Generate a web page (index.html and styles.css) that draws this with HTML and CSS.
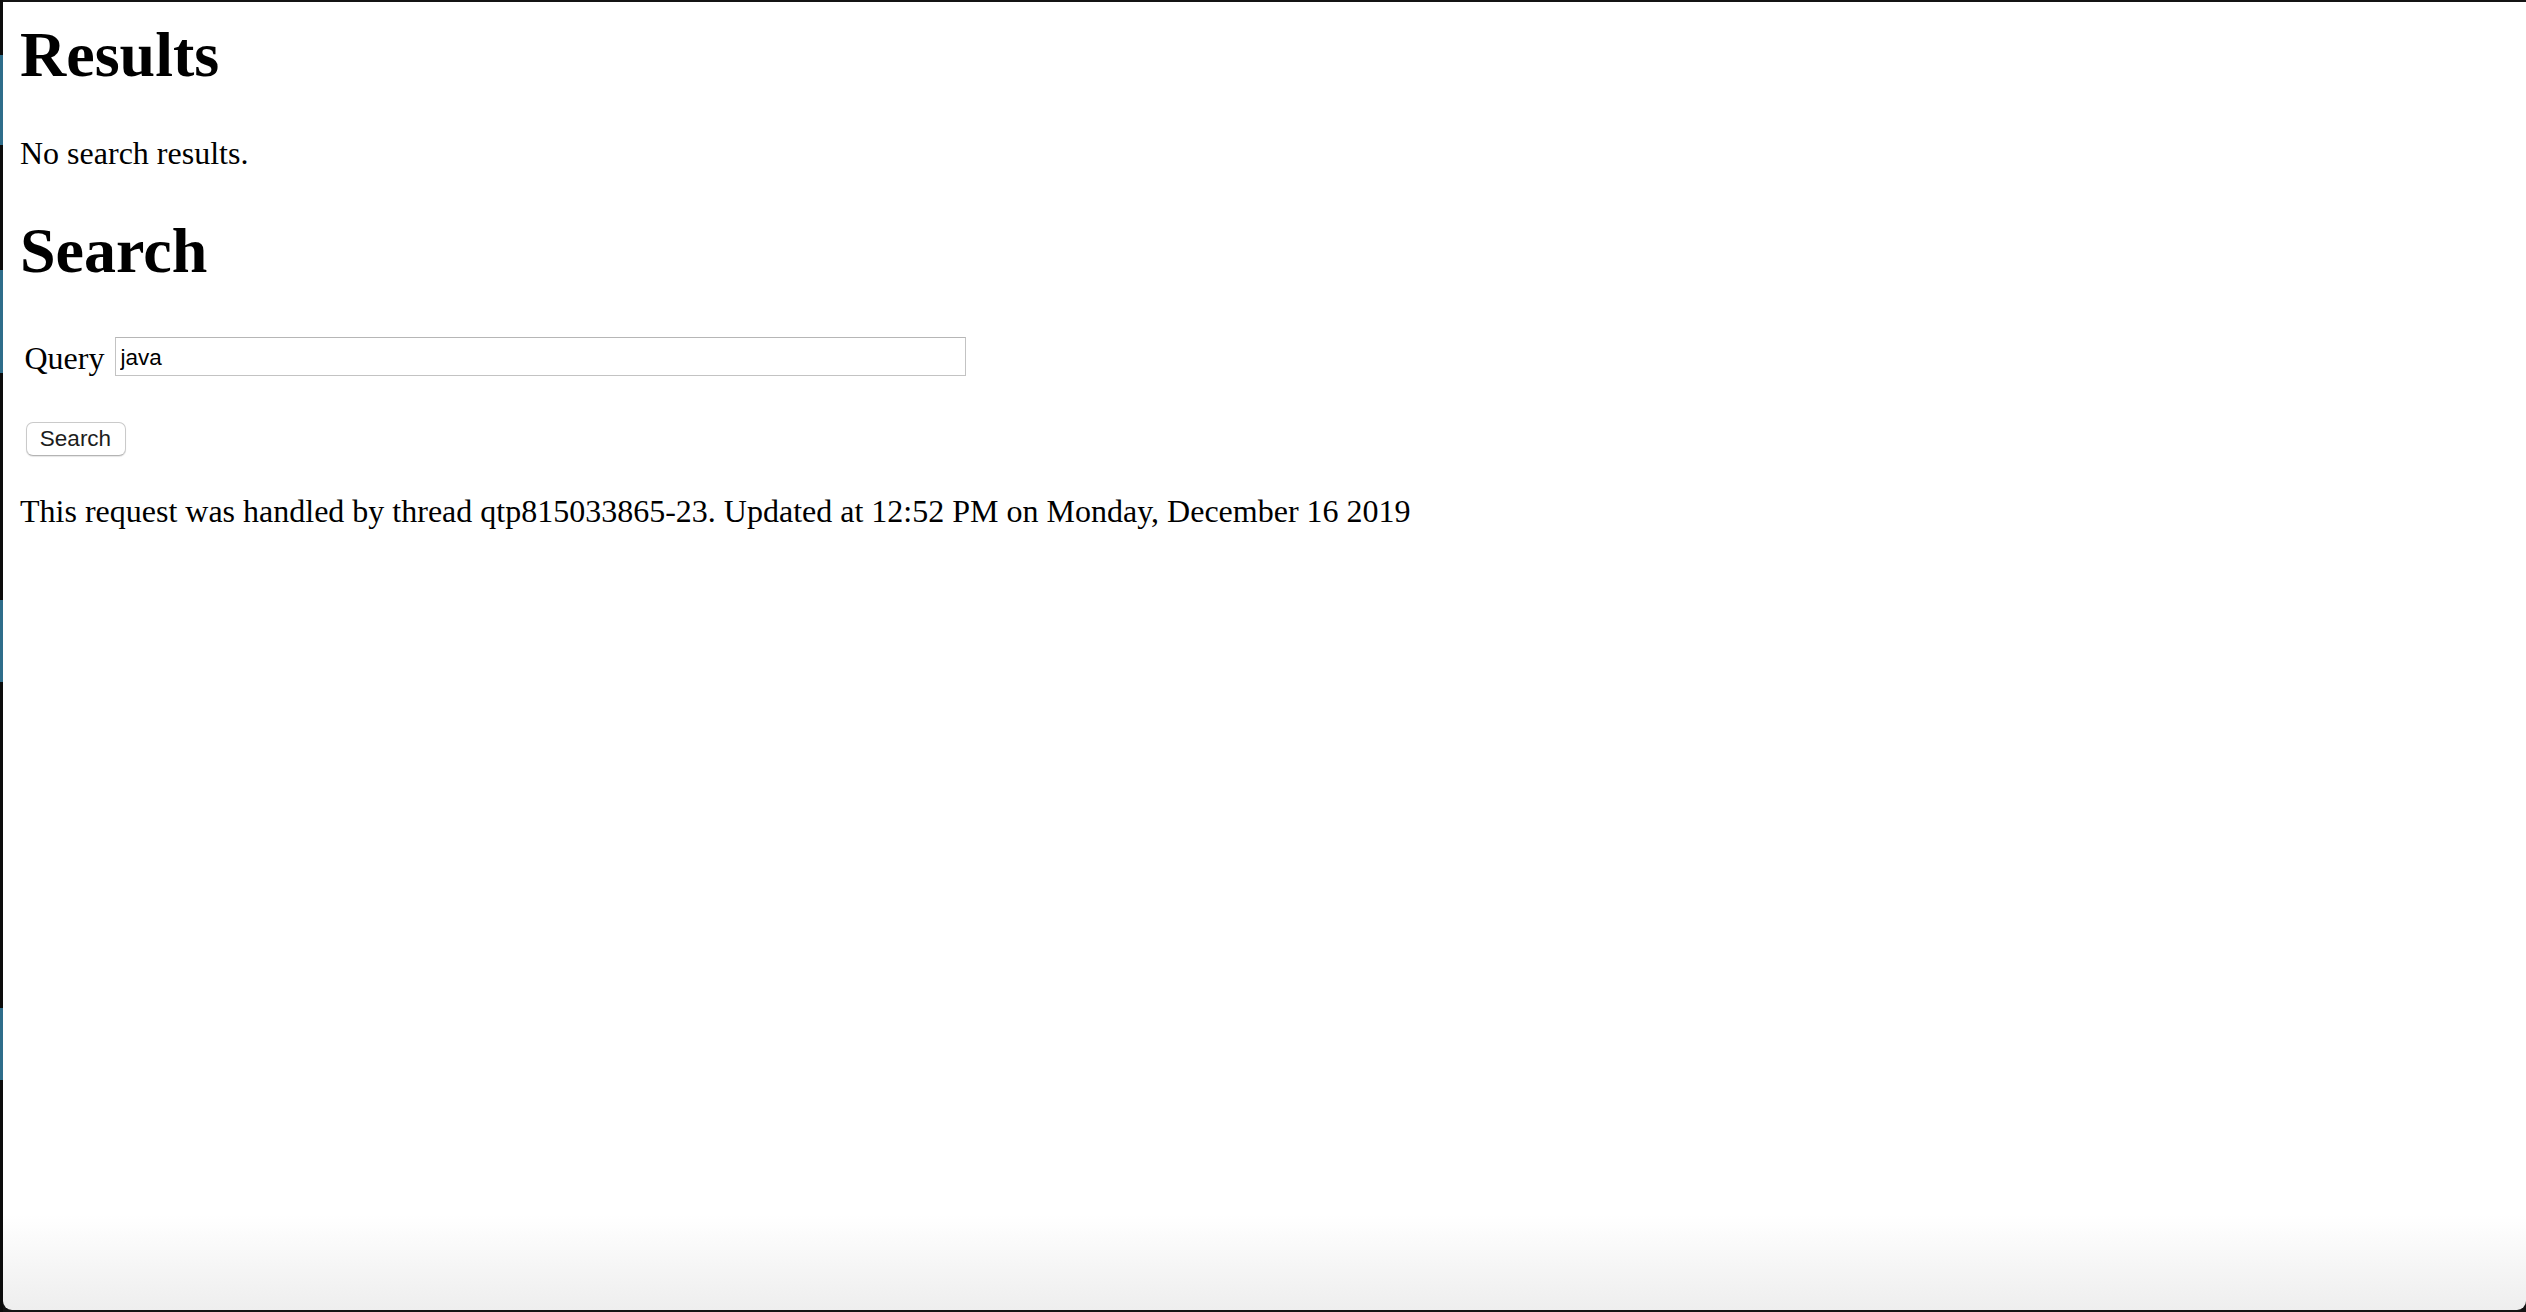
FILE: index.html
```html
<!DOCTYPE html>
<html lang="en">
<head>
<meta charset="utf-8">
<title>Search</title>
<link rel="stylesheet" href="styles.css">
</head>
<body>
<div class="desktop">
  <div class="window">
    <main class="page">
      <h1 class="heading">Results</h1>
      <p class="text">No search results.</p>
      <h1 class="heading heading-search">Search</h1>
      <form class="search-form">
        <div class="query-row">
          <label class="query-label" for="q">Query</label>
          <input class="query-input" id="q" type="text" value="java">
        </div>
        <div class="submit-row">
          <button class="submit-btn" type="button">Search</button>
        </div>
      </form>
      <p class="text footer-text">This request was handled by thread qtp815033865-23. Updated at 12:52 PM on Monday, December 16 2019</p>
    </main>
  </div>
</div>
</body>
</html>
```

FILE: styles.css
```css
html, body {
  margin: 0;
  padding: 0;
  background: #111;
  overflow: hidden;
}

.desktop {
  width: 2526px;
  height: 1312px;
  box-sizing: border-box;
  padding: 2px 0 2px 3px;
  display: flex;
  background-color: #141414;
  background-image: linear-gradient(to bottom,
    #0c0c0c 0, #0c0c0c 55px,
    #2f6d8a 55px, #2f6d8a 145px,
    #0c0c0c 145px, #0c0c0c 270px,
    #2f6d8a 270px, #2f6d8a 373px,
    #0c0c0c 373px, #0c0c0c 600px,
    #2f6d8a 600px, #2f6d8a 682px,
    #0c0c0c 682px, #0c0c0c 1008px,
    #2f6d8a 1008px, #2f6d8a 1080px,
    #0c0c0c 1080px, #0c0c0c 100%);
  background-size: 3px 100%;
  background-repeat: no-repeat;
}

.window {
  flex: 1;
  background: linear-gradient(to bottom, #ffffff 0, #ffffff 1213px, #eeeeee 1308px);
  border-radius: 0 0 9px 9px;
}

.page {
  padding: 16px 0 0 17px;
  color: #000;
}

.heading {
  font-family: "Liberation Serif", "Times New Roman", serif;
  font-weight: bold;
  font-size: 64px;
  line-height: 74px;
  margin: 0;
}

.heading-search {
  margin-top: 42px;
}

.text {
  font-family: "Liberation Serif", "Times New Roman", serif;
  font-size: 32px;
  line-height: 37px;
  margin: 43px 0 0;
}

.search-form {
  margin: 0;
}

.query-row {
  display: flex;
  align-items: center;
  gap: 11px;
  margin-top: 49px;
  padding-left: 4.5px;
  height: 39px;
}

.query-label {
  font-family: "Liberation Serif", "Times New Roman", serif;
  font-size: 32px;
  line-height: 37px;
  padding-top: 3px;
}

.query-input {
  box-sizing: border-box;
  width: 851px;
  height: 39px;
  margin: 0;
  padding: 2px 4px 0;
  border: 1px solid #c3c3c3;
  border-top-color: #b6b6b6;
  border-radius: 0;
  background: #fff;
  font-family: "Liberation Sans", Arial, sans-serif;
  font-size: 22.5px;
  color: #000;
  outline: none;
}

.submit-row {
  display: flex;
  margin-top: 46px;
  padding-left: 5.5px;
}

.submit-btn {
  box-sizing: border-box;
  width: 100px;
  height: 34px;
  margin: 0;
  padding: 0;
  border: 1px solid #cacaca;
  border-bottom-color: #b4b4b4;
  border-radius: 7px;
  background: #fff;
  box-shadow: 0 1px 1px rgba(0, 0, 0, 0.10);
  font-family: "Liberation Sans", Arial, sans-serif;
  font-size: 22.5px;
  color: #1c1c1c;
}

.footer-text {
  margin-top: 37px;
}
```
